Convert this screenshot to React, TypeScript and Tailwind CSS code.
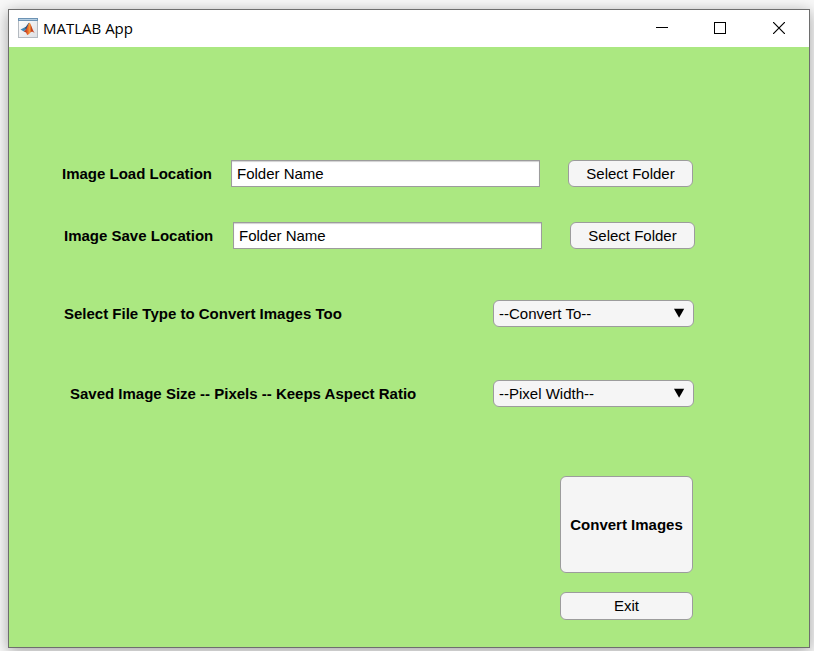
import type { ReactNode } from "react";

const control =
  "rounded-[6px] border border-[#9c9c9c] bg-[#f5f5f5] text-[15px] leading-5 text-black";

function MatlabIcon() {
  return (
    <svg width="20" height="20" viewBox="0 0 20 20" aria-hidden="true">
      <defs>
        <linearGradient id="paper" x1="0" y1="0" x2="1" y2="1">
          <stop offset="0" stopColor="#ffffff" />
          <stop offset="1" stopColor="#dde0e4" />
        </linearGradient>
        <linearGradient id="flame" x1="0" y1="0" x2="1" y2="0">
          <stop offset="0" stopColor="#8c1d12" />
          <stop offset="0.35" stopColor="#e8622a" />
          <stop offset="0.55" stopColor="#f4a03c" />
          <stop offset="0.7" stopColor="#c8421c" />
          <stop offset="1" stopColor="#c33a17" />
        </linearGradient>
      </defs>
      <rect x="0.5" y="0.5" width="19" height="19" fill="url(#paper)" stroke="#b4bac1" />
      <rect x="0" y="0" width="20" height="3" fill="#6d93b4" />
      <rect x="1" y="1" width="18" height="1" fill="#b5cee2" />
      <path d="M2.5 11.5L6.5 9.6L8.3 11L5.8 13.4Z" fill="#3d86b8" />
      <path d="M6.5 9.6C8.6 9 9.4 5.4 11.3 4.8L9.5 10.5L8 11.8Z" fill="#26547c" />
      <path
        d="M11.3 4.7C12.9 4.7 13.8 10.8 16.7 15.2C14.4 13.4 13.3 13.4 12.2 14.8C11.1 16.1 10.2 17 9.1 17C8.7 14.8 7.6 13.8 5.8 13.4C8.6 12.4 9.7 6.6 11.3 4.7Z"
        fill="url(#flame)"
      />
    </svg>
  );
}

function TitleBar() {
  return (
    <header className="flex h-[37px] items-center bg-white pb-[2px] pl-[9px]">
      <MatlabIcon />
      <h1 className="ml-[5px] flex-1 font-['Open_Sans','Noto_Sans',sans-serif] text-[15px] leading-5 text-black">
        MATLAB App
      </h1>
      <button type="button" aria-label="Minimize" className="flex h-full w-[58px] items-center justify-center">
        <svg width="12" height="12" viewBox="0 0 12 12" shapeRendering="crispEdges">
          <path d="M0 5.5H12" stroke="#000" />
        </svg>
      </button>
      <button type="button" aria-label="Maximize" className="flex h-full w-[58px] items-center justify-center">
        <svg width="12" height="12" viewBox="0 0 12 12" shapeRendering="crispEdges">
          <rect x="0.5" y="0.5" width="11" height="11" fill="none" stroke="#000" />
        </svg>
      </button>
      <button type="button" aria-label="Close" className="flex h-full w-[60px] items-center justify-center">
        <svg width="12" height="12" viewBox="0 0 12 12">
          <path d="M0 0L12 12M12 0L0 12" stroke="#000" strokeWidth="1.2" />
        </svg>
      </button>
    </header>
  );
}

function FolderRow({ id, label }: { id: string; label: string }) {
  return (
    <div className="flex items-center">
      <label htmlFor={id} className="w-[169px] shrink-0 font-bold">
        {label}
      </label>
      <input
        id={id}
        type="text"
        defaultValue="Folder Name"
        className="h-[27px] min-w-0 flex-1 border border-[#9c9c9c] bg-white px-[5px] text-[15px] leading-5 text-black shadow-[inset_0_1px_1px_#d0d0d0]"
      />
      <button type="button" className={`${control} ml-7 h-[27px] w-[125px] shrink-0`}>
        Select Folder
      </button>
    </div>
  );
}

function ChoiceRow({ id, label, children }: { id: string; label: string; children: ReactNode }) {
  return (
    <div className="flex items-center justify-between">
      <label htmlFor={id} className="font-bold">
        {label}
      </label>
      <div className="relative">
        <select id={id} className={`${control} h-[27px] w-[201px] appearance-none px-[5px]`}>
          {children}
        </select>
        <svg
          className="pointer-events-none absolute top-[8px] right-[9px]"
          width="11"
          height="10"
          viewBox="0 0 11 10"
          aria-hidden="true"
        >
          <path d="M0 0.8H10.2L5.1 9.8Z" fill="#000" />
        </svg>
      </div>
    </div>
  );
}

export default function App() {
  return (
    <div className="flex min-h-screen bg-[#f8f8f8] pt-[9px] pr-1 pb-[3px] pl-2 font-['Liberation_Sans',Arial,sans-serif] text-[15px] leading-5 text-black">
      <div className="flex flex-1 flex-col border border-[#6e6e6e] shadow-[0_3px_14px_rgba(0,0,0,0.35)]">
        <TitleBar />
        <main className="flex-1 bg-[#abe881] pt-[113px] pb-[27px]">
          <form className="flex flex-col">
            <div className="pr-[116px] pl-[53px]">
              <FolderRow id="load" label="Image Load Location" />
            </div>
            <div className="mt-[35px] pr-[114px] pl-[55px]">
              <FolderRow id="save" label="Image Save Location" />
            </div>
            <div className="mt-[51px] pr-[115px] pl-[55px]">
              <ChoiceRow id="type" label="Select File Type to Convert Images Too">
                <option>--Convert To--</option>
              </ChoiceRow>
            </div>
            <div className="mt-[53px] pr-[115px] pl-[61px]">
              <ChoiceRow id="size" label="Saved Image Size -- Pixels -- Keeps Aspect Ratio">
                <option>--Pixel Width--</option>
              </ChoiceRow>
            </div>
            <div className="mt-[69px] flex flex-col items-end gap-[19px] pr-[116px]">
              <button type="button" className={`${control} h-[97px] w-[133px] font-bold`}>
                Convert Images
              </button>
              <button type="button" className={`${control} h-7 w-[133px]`}>
                Exit
              </button>
            </div>
          </form>
        </main>
      </div>
    </div>
  );
}
